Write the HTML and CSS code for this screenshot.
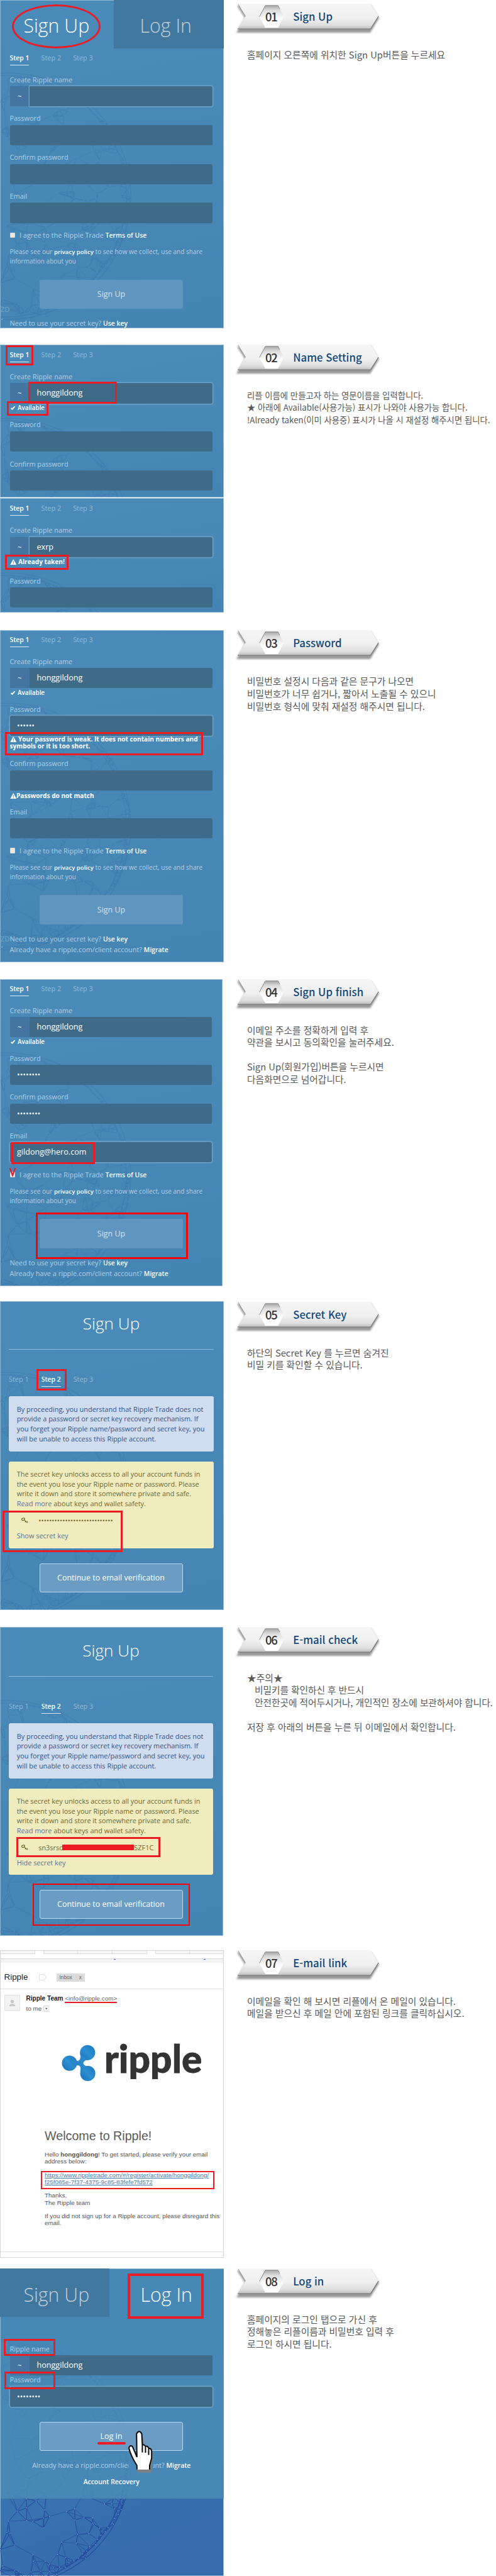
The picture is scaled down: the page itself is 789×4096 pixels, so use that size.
FILE: index.html
```
<!DOCTYPE html>
<html lang="ko">
<head>
<meta charset="utf-8">
<title>Ripple 가입 안내</title>
<link rel="stylesheet" href="styles.css">
</head>
<body>
<svg class="defs" width="0" height="0" aria-hidden="true">
  <defs>
    <linearGradient id="ribbonFill" x1="0" y1="0" x2="0" y2="1">
      <stop offset="0" stop-color="#f5f5f5"/><stop offset=".55" stop-color="#f0f0f0"/><stop offset=".85" stop-color="#dedede"/><stop offset="1" stop-color="#bdbdbd"/>
    </linearGradient>
    <linearGradient id="hexFill" x1="0" y1="0" x2="0" y2="1">
      <stop offset="0" stop-color="#a9a9a9"/><stop offset=".22" stop-color="#dcdcdc"/><stop offset=".6" stop-color="#fdfdfd"/><stop offset="1" stop-color="#fff"/>
    </linearGradient>
    <linearGradient id="markFill" x1="1" y1="0" x2="0" y2="1">
      <stop offset="0" stop-color="#1c74bb"/><stop offset=".5" stop-color="#2b8fd0"/><stop offset="1" stop-color="#1a6fb6"/>
    </linearGradient>
    <filter id="soft" x="-10%" y="-30%" width="120%" height="170%"><feGaussianBlur stdDeviation="1.4"/></filter>
    <symbol id="ribbon" viewBox="0 0 236 50">
      <path d="M5 3 17.500 22.500 4 46H217L231 23 218 2" fill="#777" opacity=".75" filter="url(#soft)"/>
      <path d="M6 0H217.500L230 20 217.500 40H6L18.500 20Z" fill="url(#ribbonFill)"/>
      <path d="M7 1 18.500 20" fill="none" stroke="#999" stroke-width="1"/>
      <path d="M6 40H217.500L230 20" fill="none" stroke="#707070" stroke-width="1.200"/>
      <path d="M40.700 20.500 50 2.800H70.300L79.500 20.500 70.300 38H50Z" fill="url(#hexFill)"/>
      <path d="M40.700 20.500 50 2.800H70.300L73 8" fill="none" stroke="#888" stroke-width="1"/>
    </symbol>
    <symbol id="warn" viewBox="0 0 20 18"><path d="M10 0 20 18H0Z" fill="#fff"/><path d="M10 6V12M10 13.500V16" stroke="#4788b6" stroke-width="2"/></symbol>
    <symbol id="check" viewBox="0 0 18 16"><path d="M2 9 6.500 13.500 16 2.500" fill="none" stroke="#fff" stroke-width="4"/></symbol>
    <symbol id="key" viewBox="0 0 36 32"><g fill="none" stroke="#6b6220" stroke-width="4"><ellipse cx="10" cy="9" rx="8" ry="6" transform="rotate(-25 10 9)"/><path d="M15 12 33 28M24 20 20 25M31 26 34 20"/></g></symbol>
    <symbol id="network" viewBox="0 0 220 410"><g class="web"></g></symbol>
  </defs>
</svg>

<main class="guide">

<section class="step s1">
  <div class="shot">
    <svg class="globe"><use href="#network"/></svg>
    <div class="tabs"><span class="tab">Sign Up</span><span class="tab dim in">Log In</span></div>
    <div class="steps"><b>Step 1</b><span>Step 2</span><span>Step 3</span></div>
    <div class="label first">Create Ripple name</div>
    <div class="field named focus"><i>~</i><span></span></div>
    <div class="label">Password</div><div class="field"></div>
    <div class="label">Confirm password</div><div class="field"></div>
    <div class="label">Email</div><div class="field"></div>
    <div class="agree"><i class="box"></i><span>I agree to the Ripple Trade <b>Terms of Use</b></span></div>
    <p class="policy">Please see our <b>privacy policy</b> to see how we collect, use and share<br>information about you</p>
    <div class="button off">Sign Up</div>
    <p class="foot">Need to use your secret key? <b>Use key</b></p>
    <span class="mark oval"></span><span class="zd">ZD<br>•</span>
  </div>
  <div class="info">
    <h2 class="banner"><svg><use href="#ribbon"/></svg><span class="num">01</span><span>Sign Up</span></h2>
    <p class="desc">홈페이지 오른쪽에 위치한 Sign Up버튼을 누르세요</p>
  </div>
</section>

<section class="step s2">
  <div class="stack">
    <div class="shot upper">
      <svg class="globe"><use href="#network"/></svg>
      <div class="steps"><b>Step 1</b><span>Step 2</span><span>Step 3</span></div>
      <div class="label first">Create Ripple name</div>
      <div class="field named focus"><i>~</i><span>honggildong</span></div>
      <div class="note"><svg class="ck"><use href="#check"/></svg>Available</div>
      <div class="label">Password</div><div class="field"></div>
      <div class="label">Confirm password</div><div class="field"></div>
      <span class="mark m-step"></span><span class="mark m-name"></span><span class="mark m-avail"></span>
    </div>
    <div class="shot lower">
      <svg class="globe"><use href="#network"/></svg>
      <div class="steps"><b>Step 1</b><span>Step 2</span><span>Step 3</span></div>
      <div class="label first">Create Ripple name</div>
      <div class="field named focus"><i>~</i><span>exrp</span></div>
      <div class="note strong"><svg class="wn"><use href="#warn"/></svg>Already taken!</div>
      <div class="label">Password</div><div class="field"></div>
      <span class="mark m-taken"></span>
    </div>
  </div>
  <div class="info">
    <h2 class="banner"><svg><use href="#ribbon"/></svg><span class="num">02</span><span>Name Setting</span></h2>
    <p class="desc small">리플 이름에 만들고자 하는 영문이름을 입력합니다.<br>★ 아래에 Available(사용가능) 표시가 나와야 사용가능 합니다.<br>!Already taken(이미 사용중) 표시가 나올 시 재설정 해주시면 됩니다.</p>
  </div>
</section>

<section class="step s3">
  <div class="shot">
    <svg class="globe"><use href="#network"/></svg>
    <div class="steps"><b>Step 1</b><span>Step 2</span><span>Step 3</span></div>
    <div class="label first">Create Ripple name</div>
    <div class="field named"><i>~</i><span>honggildong</span></div>
    <div class="note"><svg class="ck"><use href="#check"/></svg>Available</div>
    <div class="label">Password</div><div class="field focus dots">••••••</div>
    <div class="note strong two"><svg class="wn"><use href="#warn"/></svg>Your password is weak. It does not contain numbers and<br>symbols or it is too short.</div>
    <div class="label after-warn">Confirm password</div><div class="field"></div>
    <div class="note strong match"><svg class="wn"><use href="#warn"/></svg>Passwords do not match</div>
    <div class="label">Email</div><div class="field"></div>
    <div class="agree"><i class="box"></i><span>I agree to the Ripple Trade <b>Terms of Use</b></span></div>
    <p class="policy">Please see our <b>privacy policy</b> to see how we collect, use and share<br>information about you</p>
    <div class="button off">Sign Up</div>
    <p class="foot">Need to use your secret key? <b>Use key</b><br>Already have a ripple.com/client account? <b>Migrate</b></p>
    <span class="mark m-weak"></span><span class="zd">ZD<br>•</span>
  </div>
  <div class="info">
    <h2 class="banner"><svg><use href="#ribbon"/></svg><span class="num">03</span><span>Password</span></h2>
    <p class="desc">비밀번호 설정시 다음과 같은 문구가 나오면<br>비밀번호가 너무 쉽거나, 짧아서 노출될 수 있으니<br>비밀번호 형식에 맞춰 재설정 해주시면 됩니다.</p>
  </div>
</section>

<section class="step s4">
  <div class="shot">
    <svg class="globe"><use href="#network"/></svg>
    <div class="steps"><b>Step 1</b><span>Step 2</span><span>Step 3</span></div>
    <div class="label first">Create Ripple name</div>
    <div class="field named"><i>~</i><span>honggildong</span></div>
    <div class="note"><svg class="ck"><use href="#check"/></svg>Available</div>
    <div class="label">Password</div><div class="field dots">••••••••</div>
    <div class="label">Confirm password</div><div class="field dots">••••••••</div>
    <div class="label">Email</div><div class="field focus">gildong@hero.com</div>
    <div class="agree"><i class="box"></i><span>I agree to the Ripple Trade <b>Terms of Use</b></span></div>
    <p class="policy">Please see our <b>privacy policy</b> to see how we collect, use and share<br>information about you</p>
    <div class="button off">Sign Up</div>
    <p class="foot">Need to use your secret key? <b>Use key</b><br>Already have a ripple.com/client account? <b>Migrate</b></p>
    <span class="mark m-email"></span><span class="mark m-button"></span>
    <svg class="vee" viewBox="0 0 12 14"><path d="M1.500 0 6 12 10.500 0" fill="none" stroke="#ec1c24" stroke-width="2.200"/></svg>
  </div>
  <div class="info">
    <h2 class="banner"><svg><use href="#ribbon"/></svg><span class="num">04</span><span>Sign Up finish</span></h2>
    <p class="desc">이메일 주소를 정확하게 입력 후<br>약관을 보시고 동의확인을 눌러주세요.<br><br>Sign Up(회원가입)버튼을 누르시면<br>다음화면으로 넘어갑니다.</p>
  </div>
</section>

<section class="step s5">
  <div class="shot secret">
    <svg class="globe"><use href="#network"/></svg>
    <h3>Sign Up</h3>
    <div class="steps"><span>Step 1</span><b>Step 2</b><span>Step 3</span></div>
    <div class="card blue">By proceeding, you understand that Ripple Trade does not<br>provide a password or secret key recovery mechanism. If<br>you forget your Ripple name/password and secret key, you<br>will be unable to access this Ripple account.</div>
    <div class="card yellow">The secret key unlocks access to all your account funds in<br>the event you lose your Ripple name or password. Please<br>write it down and store it somewhere private and safe.<br><a>Read more</a> about keys and wallet safety.
      <div class="keyrow"><svg><use href="#key"/></svg><span class="hidden-key">••••••••••••••••••••••••••••</span></div>
      <a>Show secret key</a></div>
    <div class="button">Continue to email verification</div>
    <span class="mark m-step2"></span><span class="mark m-show"></span>
  </div>
  <div class="info">
    <h2 class="banner"><svg><use href="#ribbon"/></svg><span class="num">05</span><span>Secret Key</span></h2>
    <p class="desc">하단의 Secret Key 를 누르면 숨겨진<br>비밀 키를 확인할 수 있습니다.</p>
  </div>
</section>

<section class="step s6">
  <div class="shot secret">
    <svg class="globe"><use href="#network"/></svg>
    <h3>Sign Up</h3>
    <div class="steps"><span>Step 1</span><b>Step 2</b><span>Step 3</span></div>
    <div class="card blue">By proceeding, you understand that Ripple Trade does not<br>provide a password or secret key recovery mechanism. If<br>you forget your Ripple name/password and secret key, you<br>will be unable to access this Ripple account.</div>
    <div class="card yellow">The secret key unlocks access to all your account funds in<br>the event you lose your Ripple name or password. Please<br>write it down and store it somewhere private and safe.<br><a>Read more</a> about keys and wallet safety.
      <div class="keyrow"><svg><use href="#key"/></svg><span>sn3srso</span><i class="redact"></i><span>SZF1C</span></div>
      <a>Hide secret key</a></div>
    <div class="button">Continue to email verification</div>
    <span class="mark m-key"></span><span class="mark m-continue"></span>
  </div>
  <div class="info">
    <h2 class="banner"><svg><use href="#ribbon"/></svg><span class="num">06</span><span>E-mail check</span></h2>
    <p class="desc">★주의★<br><span class="indent">비밀키를 확인하신 후 반드시</span><br><span class="indent">안전한곳에 적어두시거나, 개인적인 장소에 보관하셔야 합니다.</span><br><br>저장 후 아래의 버튼을 누른 뒤 이메일에서 확인합니다.</p>
  </div>
</section>

<section class="step s7">
  <div class="mail">
    <div class="toolbar"><i class="t1"></i><i class="t2"></i><i class="t3"></i><i class="t4"></i><i class="t5"></i><i class="t6"></i></div>
    <div class="strip"><i></i><i></i></div>
    <div class="subject"><span>Ripple</span><svg viewBox="0 0 12 10"><path d="M.5.500H8.500L11.500 5 8.500 9.500H.5Z" fill="#fff" stroke="#ddd"/></svg><span class="chip">Inbox<em>x</em></span></div>
    <div class="sender">
      <svg class="avatar" viewBox="0 0 25 25"><rect x=".5" y=".5" width="24" height="24" fill="#f3f3f3" stroke="#e2e2e2"/><circle cx="12.500" cy="10.500" r="2.700" fill="#c9c9c9"/><path d="M7.500 18Q8 14.300 12.500 14.300T17.500 18Z" fill="#c9c9c9"/></svg>
      <div><div><b>Ripple Team</b> <u>&lt;info@ripple.com&gt;</u></div><div class="to">to me <svg viewBox="0 0 10 10"><rect x=".5" y=".5" width="9" height="9" rx="1" fill="#fff" stroke="#ccc"/><path d="M3 4H7L5 6.500Z" fill="#555"/></svg></div></div>
    </div>
    <svg class="logo" viewBox="98 3246 232 68">
      <g fill="url(#markFill)"><circle cx="110.600" cy="3280.600" r="12.100"/><circle cx="139.300" cy="3263.800" r="12.100"/><circle cx="139.600" cy="3296.900" r="12.100"/></g>
      <path d="M116 3274.500Q122 3278.500 126 3276Q129 3273 127.500 3266L139 3275Q133 3277 132.500 3280.500Q133 3284.500 139 3285.500L127.500 3294Q129.500 3287 126 3284.500Q121 3283 116 3287Z" fill="#2888ca"/>
      <text x="166" y="3296" class="wordmark">ripple</text>
    </svg>
    <div class="letter">
      <h3>Welcome to Ripple!</h3>
      <p class="hello">Hello <b>honggildong</b>! To get started, please verify your email<br>address below:</p>
      <p class="link">https://www.rippletrade.com/#/register/activate/honggildong/<br>f25f085e-7f37-4375-9c85-83fefe7fd572</p>
      <p class="thanks">Thanks,<br>The Ripple team</p>
      <p class="ignore">If you did not sign up for a Ripple account, please disregard this<br>email.</p>
    </div>
    <span class="mark m-link"></span>
  </div>
  <div class="info">
    <h2 class="banner"><svg><use href="#ribbon"/></svg><span class="num">07</span><span>E-mail link</span></h2>
    <p class="desc">이메일을 확인 해 보시면 리플에서 온 메일이 있습니다.<br>메일을 받으신 후 메일 안에 포함된 링크를 클릭하십시오.</p>
  </div>
</section>

<section class="step s8">
  <div class="shot login">
    <svg class="globe"><use href="#network"/></svg>
    <div class="veil">
      <div class="tabs"><span class="tab dim">Sign Up</span><span class="tab in">Log In</span></div>
      <div class="label first">Ripple name</div>
      <div class="field named"><i>~</i><span>honggildong</span></div>
      <div class="label">Password</div><div class="field focus dots">••••••••</div>
      <div class="button">Log In</div>
      <p class="foot">Already have a ripple.com/client account? <b>Migrate</b></p>
      <p class="foot recover"><b>Account Recovery</b></p>
    </div>
    <span class="mark m-tab"></span><span class="mark m-rname"></span><span class="mark m-pass"></span><span class="line"></span>
    <svg class="hand" viewBox="685 45 140 235">
      <path d="M690 205H822V262H690Z" fill="#4788b6"/>
      <path d="M772 85V130Q820 150 822 170V205L813 240V273H737V250Z" fill="#7d7f82"/>
      <path d="M735 257V235Q703 185 692 142Q695 123 711 133L735 182 733 65Q747 40 761 65L764 125Q772 120 781 132Q792 127 798 142Q811 142 814 158V195L803 235V257Z" fill="#fff"/>
      <path d="M735 257V235Q703 185 692 142Q695 123 711 133L735 190 733 65Q747 40 761 65L764 125Q772 120 781 132Q792 127 798 142Q811 142 814 158V195L803 235V257M764 120V165M781 132V166M798 142V178" fill="none" stroke="#000" stroke-width="6.500"/>
    </svg>
  </div>
  <div class="info">
    <h2 class="banner"><svg><use href="#ribbon"/></svg><span class="num">08</span><span>Log in</span></h2>
    <p class="desc">홈페이지의 로그인 탭으로 가신 후<br>정해놓은 리플이름과 비밀번호 입력 후<br>로그인 하시면 됩니다.</p>
  </div>
</section>

</main>
<script src="network.js"></script>
</body>
</html>
```
FILE: styles.css
```
* { box-sizing: border-box; }
body, h2, h3, p { margin: 0; }
body { background: #fff; width: 789px; }
i, em { font-style: normal; }
.defs { position: absolute; }

/* two columns: captured screen, explanation */
.guide { width: 789px; height: 4096px; overflow: hidden; }
.step { display: grid; grid-template-columns: 372px 1fr; align-items: start; }
.s1 { height: 547.6px; }
.s2 { height: 454.8px; }
.s3 { height: 554.2px; }
.s4 { height: 512.5px; }
.s5 { height: 517.6px; }
.s6 { height: 514px; }
.s7 { height: 506.1px; }
.s8 { height: 489.2px; }

/* explanation column */
.s1 .info { padding-top: 6.3px; }
.s5 .info { padding-top: .6px; }
.banner { position: relative; display: flex; height: 50px; font: 500 16.8px/40px "Noto Sans CJK KR", sans-serif; color: #12487a; white-space: nowrap; }
.banner svg { position: absolute; left: 0; top: 0; width: 236px; height: 50px; }
.banner span { position: relative; }
.banner .num { width: 94.2px; padding-left: 50px; font-size: 18.5px; letter-spacing: -1.2px; color: #333; }
.desc { margin-top: 21px; padding-left: 21px; font: 14.78px/19.6px "Noto Sans CJK KR", sans-serif; color: #595959; white-space: nowrap; }
.desc.small { font-size: 13.35px; }
.indent { padding-left: 12px; letter-spacing: -.1px; }

/* captured sign-up screens */
.shot { position: relative; display: flex; flex-direction: column; width: 355.5px; padding: 0 15.5px; overflow: hidden; background: linear-gradient(170deg, #4a8bb9, #4485b4); box-shadow: inset 0 0 0 1px #8fb6d2; font: 10.9px/14px "Open Sans", sans-serif; color: #b4d0e4; white-space: nowrap; }
.shot > *, .veil > * { flex: none; }
.shot > :not(.globe):not(.mark):not(.zd):not(.vee):not(.hand):not(.line) { position: relative; }
.shot b { font-weight: 600; font-size: 10.4px; color: #fff; }
.globe { position: absolute; left: 0; width: 220px; height: 410px; opacity: .13; }
.web line { stroke: #1d3f95; stroke-width: .7; }
.web .rim { fill: none; stroke: #22409b; stroke-width: 1.2; }
.web circle { fill: #b9c4ff; }
.s1 .shot { height: 522px; }
.s1 .globe { top: 107px; }
.s3 .shot { height: 527.6px; }
.s3 .globe { top: 107px; }
.s4 .shot { height: 488px; width: 354.2px; }
.s4 .globe { top: 108px; }
.s5 .shot { height: 491px; }
.s5 .globe { top: 104px; }
.s6 .shot { height: 491px; width: 354.6px; }
.s6 .globe { top: 108px; }
.stack { display: flex; flex-direction: column; gap: 1px; }
.upper { height: 243.9px; }
.upper .globe { top: 108px; }
.lower { height: 181.4px; }
.lower .globe { top: 110px; }

.tabs { display: grid; grid-template-columns: 180.5px 1fr; height: 77px; margin: 0 -15.5px; }
.tab { font: 300 30.3px/81px "Open Sans", sans-serif; color: #fff; padding-left: 37.5px; height: 77px; }
.tab.in { padding-left: 42px; }
.tab.dim { background: #40789f; color: #c3ced6; }

.steps { display: flex; gap: 19px; height: 19px; margin-top: 8.2px; color: #94bcd8; }
.steps b { font-size: 10.4px; border-bottom: 1.5px solid #dbe9f3; }
.label { height: 14px; margin-top: 12px; }
.label.first { margin-top: 15.6px; }
.field { height: 32px; margin-top: 3.5px; margin-right: 2px; border-radius: 2.5px; background: #3f6b89; padding-left: 11.5px; font-size: 12.6px; line-height: 31px; color: #fff; }
.s1 .field { margin-right: 2.5px; }
.field.named { display: flex; padding: 0; color: #fff; }
.field.named i { width: 31.5px; background: #4375a0; border-radius: 2.5px 0 0 2.5px; text-align: center; font-size: 11px; }
.field.named span { flex: 1; padding-left: 11.5px; border-radius: 0 2.5px 2.5px 0; }
.field.focus:not(.named), .field.named.focus span { box-shadow: 0 0 2px 1px #7fb0d2; }
.field.dots { font-size: 12.4px; }
.note { height: 14px; font-weight: 600; font-size: 9.8px; color: #fff; }
.note.strong { font-weight: 700; font-size: 10.13px; }
.note svg { display: inline-block; height: 8px; vertical-align: -.5px; }
.note .ck { width: 9px; height: 7px; margin-right: 3.5px; }
.note .wn { width: 10.5px; height: 9px; margin-right: 3px; vertical-align: -1px; }
.agree { display: flex; gap: 7px; align-items: center; height: 14px; margin-top: 12.3px; font-size: 10.9px; }
.agree .box { width: 8.5px; height: 8.5px; background: #ece9e2; border: 1px solid #d7dbdc; border-radius: 1px; }
.policy { margin-top: 12.2px; height: 28px; font-size: 10.06px; }
.shot .policy b { font-size: 9.6px; }
.button { display: flex; align-items: center; justify-content: center; height: 46.6px; width: 228px; margin: 23.6px 0 0 47.5px; border: 1px solid #bcd7e9; border-radius: 3px; background: #6b9dc4; font-size: 12.48px; color: #fff; }
.button.off { background: #6095bf; border-color: #6095bf; color: #d4e4f0; }
.foot { margin-top: 15.2px; line-height: 15.6px; }
.zd { position: absolute; left: 1px; top: 484px; font-size: 11px; color: #76a8cb; line-height: 16px; }
.s3 .zd { top: 484px; line-height: 13px; }

.s1 .field { height: 32.2px; }
.s1 .foot { margin-top: 14.5px; }
.upper .steps { margin-top: 9.2px; }
.upper .label.first { margin-top: 16.3px; }
.upper .label { margin-top: 12.5px; }
.upper .field, .lower .field { margin-top: 3.3px; height: 32.5px; }
.lower .steps { margin-top: 8.3px; }
.lower .label { margin-top: 16.5px; }
.s3 .steps { margin-top: 7.3px; }
.s3 .label.first { margin-top: 16.2px; }
.s3 .note { margin-top: .5px; }
.s3 .note.two { margin-top: -.3px; height: 22.6px; line-height: 11.3px; }
.s3 .label.after-warn { margin-top: 14.4px; }
.s3 .note.match { margin-top: 1.3px; }
.s3 .note.match svg { margin-right: 0; }
.s4 .steps { margin-top: 8.4px; }
.s4 .note { margin-top: .8px; }

/* secret-key screens */
.secret { padding: 0 14px; }
.secret h3 { margin-right: 1.5px; height: 77.3px; border-bottom: 1.5px solid #8fbad7; text-align: center; font: 300 26.2px/70px "Open Sans", sans-serif; color: #fff; }
.secret .steps { margin-top: 39.9px; gap: 20px; }
.card { border-radius: 3px; margin: 15.1px 1.5px 0 0; padding: 12.3px 0 0 12.7px; height: 87.6px; font-size: 10.93px; line-height: 15.65px; }
.card.blue { background: #d0dcf0; color: #35527f; }
.card.yellow { margin-top: 15.8px; height: 138.2px; background: #f1ecbe; color: #6d6733; }
.card a { color: #56729c; }
.keyrow { display: flex; align-items: center; height: 35.2px; padding: 3px 0 0 7.5px; }
.keyrow svg { width: 10.5px; height: 9.5px; margin-right: 16.5px; }
.hidden-key { letter-spacing: .13px; color: #6b6220; }
.redact { width: 114px; height: 8.5px; margin-left: -1.5px; background: #ec1c24; border-radius: 1px; }
.secret .button { margin-left: 48.5px; margin-top: 23.8px; }
.s6 .secret h3 { height: 79.6px; line-height: 74.4px; border-bottom-width: 1px; }
.s6 .card.yellow { height: 137.4px; }

/* mail screen */
.mail { position: relative; width: 355.5px; height: 489.2px; border: 1px solid #d6d6d6; font: 9.9px/11.4px "Liberation Sans", Arial, sans-serif; color: #555; white-space: nowrap; }
.toolbar { display: flex; height: 5px; }
.toolbar i { width: 55px; border: 1px solid #ddd; border-top: 0; border-left-width: 0; background: #f5f5f5; }
.toolbar .t2, .toolbar .t5 { margin-left: 13px; border-left-width: 1px; }
.toolbar .t6 { flex: 1; border-right: 0; }
.strip { display: flex; gap: 140px; margin-top: 7.4px; height: 6.6px; padding-left: 180px; border-top: 1px solid #d8d8d8; background: #f3f3f3; }
.strip i { width: 3px; height: 1px; background: #3f67c0; }
.subject { display: flex; align-items: center; height: 42.4px; padding: 6px 0 0 5.5px; border-bottom: 1.5px solid #e2e2e2; }
.subject > span:first-child { font-size: 13.4px; color: #222; line-height: 18px; }
.subject svg { width: 12px; height: 10px; margin-left: 17.5px; }
.chip { margin-left: 16.5px; width: 45px; height: 13px; padding-left: 4px; background: #dcdcdc; font-size: 8.3px; line-height: 13px; color: #666; }
.chip em { margin-left: 11px; }
.sender { display: flex; padding: 7px 0 0 6px; line-height: 15.8px; height: 42px; }
.avatar { width: 25px; height: 25px; margin: 2px 9.5px 0 0; }
.sender b { color: #222; font-size: 10.05px; }
.sender u { text-decoration: none; color: #666; border-bottom: 2px solid #ec1c24; }
.to svg { width: 9.500px; height: 9.500px; vertical-align: -2px; }
.logo { display: block; width: 232px; height: 68px; margin: 40.5px 0 0 97px; }
.wordmark { font: 900 60.5px Lato, sans-serif; fill: #333; stroke: #333; stroke-width: .8; }
.letter { padding-left: 70px; margin-top: 70.5px; }
.letter h3 { font-weight: 400; font-size: 19.7px; line-height: 24px; color: #5a5a5a; }
.hello { margin-top: 12.8px; line-height: 10.8px; }
.link { margin-top: 10.4px; color: #4a7bad; text-decoration: underline; }
.thanks { margin-top: 9.3px; line-height: 11.7px; }
.ignore { margin-top: 9.3px; padding-bottom: 40px; border-bottom: 1.5px solid #e2e2e2; margin-left: -70px; padding-left: 70px; }

/* log-in screen */
.login { height: 489.2px; padding: 0; background: linear-gradient(160deg, #3a7ab3 40%, #366cad 85%); }
.login .globe { top: 104px; opacity: .8; }
.veil { display: flex; flex-direction: column; height: 366.3px; padding: 0 15.5px; background: rgba(73, 139, 183, .87); box-shadow: inset 0 1px #8fb6d2, inset 1px 0 #8fb6d2; }
.login .tabs { grid-template-columns: 174px 1fr; }
.login .tab { line-height: 83px; }
.login .tab.in { padding-left: 49.5px; }
.login .label.first { margin-top: 43.8px; }
.login .label:not(.first) { margin-top: .4px; }
.login .button { margin-top: 23.8px; }
.login .foot { margin-top: 15px; text-align: center; padding-right: 1px; }
.login .recover { margin-top: 8.6px; }

/* red annotations drawn over the screens */
.mark { position: absolute; border: 3.5px solid #ec1c24; }
.oval { left: 18.500px; top: 6.500px; width: 141px; height: 70px; border-radius: 50%; border-width: 3px; }
.m-step { left: 9px; top: 1.800px; width: 43.500px; height: 31.500px; }
.m-name { left: 45.300px; top: 59px; width: 140.500px; height: 35.600px; border-width: 3px; }
.m-avail { left: 11px; top: 90.400px; width: 65.500px; height: 22.800px; }
.m-taken { left: 8px; top: 89.200px; width: 100.500px; height: 24.300px; }
.m-weak { left: 8px; top: 161.800px; width: 315px; height: 37px; }
.m-email { left: 17.600px; top: 259.200px; width: 133.400px; height: 35.200px; border-width: 3px; }
.m-button { left: 56.800px; top: 371.500px; width: 242.500px; height: 74px; border-color: #f00; }
.vee { position: absolute; left: 13.500px; top: 300px; width: 12px; height: 14px; }
.m-step2 { left: 57.900px; top: 108.200px; width: 47.700px; height: 34px; }
.m-show { left: 4px; top: 332.600px; width: 191px; height: 66px; }
.m-key { left: 25.700px; top: 334.600px; width: 229.600px; height: 31.500px; border-width: 3px; }
.m-continue { left: 52.300px; top: 408.600px; width: 249.600px; height: 66.500px; border: 2px solid #f00; }
.m-link { left: 64px; top: 350px; width: 275.500px; height: 29px; border-width: 2px; }
.m-tab { left: 202.800px; top: 8.500px; width: 121.700px; height: 72px; border-width: 4px; }
.m-rname { left: 6px; top: 112.600px; width: 82px; height: 26.600px; }
.m-pass { left: 6.500px; top: 164.500px; width: 81px; height: 28px; }
.line { position: absolute; left: 154.800px; top: 276px; width: 45.200px; height: 3.800px; border-radius: 2px; background: #ec1c24; }
.hand { position: absolute; left: 203px; top: 257.500px; width: 41.500px; height: 69.700px; }
```
FILE: network.js
```
// Draws the node network inside the shared globe symbol.
(function () {
  var ns = 'http://www.w3.org/2000/svg';
  var web = document.querySelector('.web');
  var cx = 12, cy = 205, r = 197, seed = 7, pts = [];
  function rnd() { seed = (seed * 16807) % 2147483647; return seed / 2147483647; }
  function add(name, attrs) {
    var el = document.createElementNS(ns, name);
    for (var k in attrs) el.setAttribute(k, attrs[k]);
    web.appendChild(el);
  }
  while (pts.length < 170) {
    var x = rnd() * 210, y = rnd() * 410;
    if (Math.hypot(x - cx, y - cy) < r - 4) pts.push([x, y]);
  }
  for (var a = -1.5; a < 1.5; a += 0.045) {
    var rr = r - rnd() * 12;
    pts.push([cx + rr * Math.cos(a), cy + rr * Math.sin(a)]);
  }
  pts.forEach(function (p, i) {
    pts.map(function (q, j) { return [Math.hypot(p[0] - q[0], p[1] - q[1]), j]; })
      .sort(function (m, n) { return m[0] - n[0]; })
      .slice(1, 5)
      .forEach(function (n) {
        var q = pts[n[1]];
        add('line', { x1: p[0], y1: p[1], x2: q[0], y2: q[1] });
      });
  });
  add('circle', { 'class': 'rim', cx: cx, cy: cy, r: r - 1, fill: 'none' });
  add('circle', { 'class': 'rim', cx: cx - 3, cy: cy, r: r - 5, fill: 'none' });
  pts.forEach(function (p) { add('circle', { 'class': 'node', cx: p[0], cy: p[1], r: 0.7 }); });
})();
```
